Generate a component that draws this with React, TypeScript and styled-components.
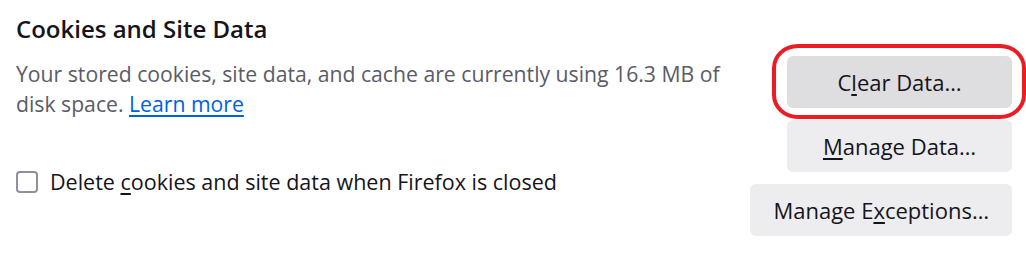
import React from 'react';
import styled, { createGlobalStyle } from 'styled-components';

const GlobalStyle = createGlobalStyle`
    html, body {
        margin: 0;
        padding: 0;
        background: #ffffff;
    }

    body {
        font-family: "Open Sans", "Noto Sans", "Liberation Sans", sans-serif;
        color: #15141a;
    }
`;

const Section = styled.section`
    position: relative;
    width: 1026px;
    height: 258px;
    box-sizing: border-box;
    padding: 13px 14px 0 16px;
    overflow: hidden;
`;

const Heading = styled.h2`
    margin: 0;
    font-size: 24px;
    font-weight: 600;
    line-height: 32px;
    color: #15141a;
`;

const Body = styled.div`
    display: flex;
    justify-content: space-between;
    align-items: flex-start;
    margin-top: 11px;
`;

const LeftColumn = styled.div`
    display: flex;
    flex-direction: column;
    width: 730px;
`;

const Description = styled.p`
    margin: 3px 0 0;
    font-size: 21.2px;
    line-height: 30px;
    color: #5b5b66;
`;

const Link = styled.a`
    color: #0061e0;
    text-decoration: underline;
    text-underline-offset: 3px;
    cursor: pointer;
`;

const CheckRow = styled.label`
    display: flex;
    align-items: center;
    gap: 12px;
    margin-top: 48px;
    font-size: 21.5px;
    line-height: 30px;
    color: #15141a;
`;

const Box = styled.span`
    width: 22px;
    height: 22px;
    box-sizing: border-box;
    border: 2px solid #8f8f9d;
    border-radius: 4px;
    background: #ffffff;
    flex: none;
`;

const ButtonColumn = styled.div`
    display: flex;
    flex-direction: column;
    align-items: flex-end;
    gap: 12px;
`;

const Button = styled.button<{ $active?: boolean }>`
    height: 52px;
    min-width: 225px;
    padding: 0 23px;
    box-sizing: border-box;
    border: none;
    border-radius: 6px;
    background: ${p => (p.$active ? '#dedee0' : '#ededef')};
    font-family: inherit;
    font-size: 22px;
    font-weight: 500;
    color: #15141a;
    cursor: pointer;
`;

const Key = styled.span`
    text-decoration: underline;
    text-underline-offset: 3px;
`;

const Annotation = styled.div`
    position: absolute;
    left: 772px;
    top: 44px;
    width: 254px;
    height: 75px;
    box-sizing: border-box;
    border: 4px solid #ec1c24;
    border-radius: 26px / 24px;
    pointer-events: none;
`;

function App() {
    return (
        <>
            <GlobalStyle />
            <Section>
                <Heading>Cookies and Site Data</Heading>
                <Body>
                    <LeftColumn>
                        <Description>
                            Your stored cookies, site data, and cache are currently using 16.3 MB of disk space.{' '}
                            <Link>Learn more</Link>
                        </Description>
                        <CheckRow>
                            <Box />
                            <span>Delete <Key>c</Key>ookies and site data when Firefox is closed</span>
                        </CheckRow>
                    </LeftColumn>
                    <ButtonColumn>
                        <Button $active>C<Key>l</Key>ear Data…</Button>
                        <Button><Key>M</Key>anage Data…</Button>
                        <Button>Manage E<Key>x</Key>ceptions…</Button>
                    </ButtonColumn>
                </Body>
                <Annotation />
            </Section>
        </>
    );
}

export default App;
